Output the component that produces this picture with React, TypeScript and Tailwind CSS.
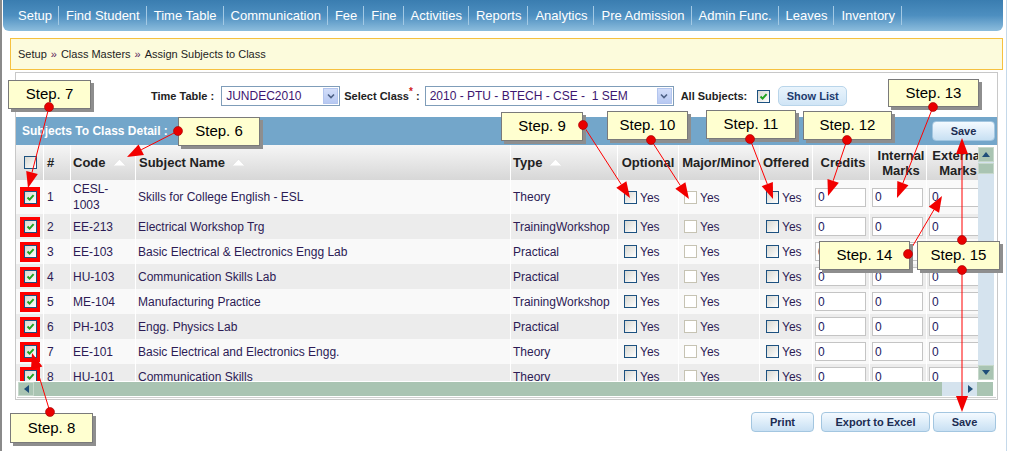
import React from "react";

const navItems = [
  "Setup",
  "Find Student",
  "Time Table",
  "Communication",
  "Fee",
  "Fine",
  "Activities",
  "Reports",
  "Analytics",
  "Pre Admission",
  "Admin Func.",
  "Leaves",
  "Inventory",
];

type Subject = { code: string; name: string; type: string };

const subjects: Subject[] = [
  { code: "CESL-\n1003", name: "Skills for College English - ESL", type: "Theory" },
  { code: "EE-213", name: "Electrical Workshop Trg", type: "TrainingWorkshop" },
  { code: "EE-103", name: "Basic Electrical & Electronics Engg Lab", type: "Practical" },
  { code: "HU-103", name: "Communication Skills Lab", type: "Practical" },
  { code: "ME-104", name: "Manufacturing Practice", type: "TrainingWorkshop" },
  { code: "PH-103", name: "Engg. Physics Lab", type: "Practical" },
  { code: "EE-101", name: "Basic Electrical and Electronics Engg.", type: "Theory" },
  { code: "HU-101", name: "Communication Skills", type: "Theory" },
];

const cols = "grid grid-cols-[28px_27px_65px_375px_107px_61px_81px_53px_57px_57px_57px]";

function Box({ checked, disabled }: { checked?: boolean; disabled?: boolean }) {
  return (
    <span
      className={`relative inline-block w-[13px] h-[13px] shrink-0 border ${
        disabled
          ? "border-[#c6c3b3] bg-white"
          : "border-[#1c5180] bg-linear-to-br from-[#d8d8d2] to-white"
      }`}
    >
      {checked && (
        <svg className="absolute inset-0" width="11" height="11" viewBox="0 0 11 11">
          <path d="M2.5 5.5 L4.6 7.6 L8.6 3.2" stroke="#1fa31f" strokeWidth="2" fill="none" />
        </svg>
      )}
    </span>
  );
}

function SortIcon() {
  return (
    <svg width="15" height="9" viewBox="0 0 15 9" className="ml-[6px]">
      <polygon points="7.5,1 14,8 1,8" fill="#ffffff" stroke="#e4e4e4" strokeWidth="1" />
    </svg>
  );
}

function Btn({ label, className }: { label: string; className: string }) {
  return (
    <button
      className={`${className} h-[20px] rounded-[4px] border border-[#a3c6e0] bg-linear-to-b from-[#f4faff] to-[#c8e0f3] text-[11px] font-bold text-[#1b2c52] leading-none`}
    >
      {label}
    </button>
  );
}

function Select({ value, className }: { value: string; className: string }) {
  return (
    <div className={`${className} h-[20px] border border-[#7f9db9] bg-white flex items-center justify-between`}>
      <span className="pl-[4px] text-[12px] font-normal text-[#3d1670] whitespace-pre">{value}</span>
      <span className="w-[15px] h-[16px] mr-px bg-linear-to-b from-[#d3def9] to-[#b7c9f2] border border-[#b3c5ee] flex items-center justify-center">
        <svg width="8" height="6" viewBox="0 0 8 6">
          <path d="M1 1.5 L4 4.5 L7 1.5" stroke="#4d6185" strokeWidth="1.6" fill="none" />
        </svg>
      </span>
    </div>
  );
}

function Arrow({ x1, y1, x2, y2 }: { x1: number; y1: number; x2: number; y2: number }) {
  const dx = x2 - x1;
  const dy = y2 - y1;
  const len = Math.hypot(dx, dy);
  const ux = dx / len;
  const uy = dy / len;
  const L = 16;
  const W = 6;
  const bx = x2 - ux * L;
  const by = y2 - uy * L;
  const pts = `${x2},${y2} ${bx - uy * W},${by + ux * W} ${bx + uy * W},${by - ux * W}`;
  return (
    <g>
      <line x1={x1} y1={y1} x2={bx} y2={by} stroke="#ff0000" strokeWidth="1" />
      <polygon points={pts} fill="#f20000" />
    </g>
  );
}

const arrows = [
  [49, 107, 28, 188],
  [178, 131, 127, 157],
  [583, 125, 630, 198],
  [651, 140, 689, 199],
  [750, 139, 773, 199],
  [847, 140, 828, 196],
  [933, 107, 897, 198],
  [908, 254, 942, 196],
  [962, 240, 962, 138],
  [962, 270, 962, 412],
  [50, 412, 32, 353],
];

function Callout({ label, className }: { label: string; className: string }) {
  return (
    <div
      className={`absolute ${className} bg-[#ffffd0] border border-[#7a7a7a] shadow-[3px_3px_0_#8e8e8e] flex items-center justify-center text-[15px] text-black`}
    >
      {label}
    </div>
  );
}

function Annotations() {
  return (
    <div className="absolute inset-0 pointer-events-none">
      <svg className="absolute inset-0" width="1009" height="451">
        {arrows.map((a, i) => (
          <Arrow key={i} x1={a[0]} y1={a[1]} x2={a[2]} y2={a[3]} />
        ))}
      </svg>
      <Callout label="Step. 7" className="left-[8px] top-[80px] w-[83px] h-[29px]" />
      <Callout label="Step. 6" className="left-[178px] top-[117px] w-[82px] h-[29px]" />
      <Callout label="Step. 9" className="left-[501px] top-[112px] w-[82px] h-[29px]" />
      <Callout label="Step. 10" className="left-[607px] top-[111px] w-[81px] h-[29px]" />
      <Callout label="Step. 11" className="left-[706px] top-[110px] w-[90px] h-[29px]" />
      <Callout label="Step. 12" className="left-[803px] top-[111px] w-[89px] h-[29px]" />
      <Callout label="Step. 13" className="left-[888px] top-[79px] w-[91px] h-[28px]" />
      <Callout label="Step. 14" className="left-[819px] top-[241px] w-[91px] h-[29px]" />
      <Callout label="Step. 15" className="left-[917px] top-[241px] w-[83px] h-[29px]" />
      <Callout label="Step. 8" className="left-[10px] top-[413px] w-[83px] h-[30px]" />
      <svg className="absolute inset-0" width="1009" height="451">
        {arrows.map((a, i) => (
          <circle key={i} cx={a[0]} cy={a[1]} r="4.5" fill="#e80000" stroke="#a00000" strokeWidth="0.6" />
        ))}
      </svg>
    </div>
  );
}

export default function App() {
  return (
    <div className="relative w-[1009px] h-[451px] overflow-hidden bg-white flex font-['Liberation_Sans',Arial,sans-serif]">
      <div className="w-[2px] bg-[#8a8a8a]" />
      <div className="w-[1004px] flex flex-col">
        {/* top menu */}
        <div className="ml-px w-[1000px] h-[31px] rounded-b-[6px] bg-linear-to-b from-[#3a7db0] via-[#4d8fc0] to-[#8cbddd] flex items-center pl-[8px]">
          {navItems.map((item) => (
            <div key={item} className="flex items-center">
              <span className="pl-[7px] pr-[6px] text-[13px] text-white">{item}</span>
              <span className="w-px h-[19px] bg-[#a3c9e4]" />
            </div>
          ))}
        </div>

        {/* breadcrumb */}
        <div className="mt-[7px] ml-[8px] w-[993px] h-[32px] border border-[#f6c13f] bg-[#fcfbdc] flex items-center pl-[7px] text-[11px] text-[#1e1e1e]">
          Setup <span className="mx-[4px] text-[#5a1a5a]">»</span> Class Masters{" "}
          <span className="mx-[4px] text-[#5a1a5a]">»</span> Assign Subjects to Class
        </div>

        {/* panel */}
        <div className="mt-[2px] ml-[13px] w-[983px] h-[328px] border border-[#c8c8c8] flex flex-col">
          <div className="h-[44px] pt-[13px] pl-[135px] flex items-start">
            <div className="flex items-center h-[20px] text-[11px] font-bold text-[#222]">
              <span>Time Table :</span>
              <Select value="JUNDEC2010" className="ml-[7px] w-[119px]" />
              <span className="ml-[4px]">
                Select Class<sup className="text-[#d02020] text-[10px]">*</sup> :
              </span>
              <Select value="2010 - PTU - BTECH - CSE -  1 SEM" className="ml-[5px] w-[249px]" />
              <span className="ml-[7px]">All Subjects:</span>
              <span className="ml-[10px] flex">
                <Box checked />
              </span>
              <button className="ml-[8px] w-[69px] h-[20px] rounded-[5px] border border-[#b9d5ea] bg-linear-to-b from-[#e9f4fc] to-[#d0e5f6] text-[11px] font-bold text-[#1c3a6e]">
                Show List
              </button>
            </div>
          </div>

          <div className="h-[28px] bg-[#73a6ca] flex items-center justify-between pl-[6px] pr-[2px]">
            <span className="text-[12px] font-bold text-white">Subjects To Class Detail :</span>
            <Btn label="Save" className="w-[63px]" />
          </div>

          <div className="flex">
            <div className="w-[962px] h-[236px] overflow-hidden bg-white">
              <div className={`${cols} h-[35px] bg-linear-to-b from-[#f6f6f6] to-[#d7d7d7] text-[13px] font-bold text-[#222]`}>
                <div className="flex items-center pl-[8px] border-r border-white">
                  <Box />
                </div>
                <div className="flex items-center pl-[3px] border-r border-white">#</div>
                <div className="flex items-center pl-[2px] border-r border-white">
                  Code
                  <SortIcon />
                </div>
                <div className="flex items-center pl-[3px] border-r border-white">
                  Subject Name
                  <SortIcon />
                </div>
                <div className="flex items-center pl-[2px] border-r border-white">
                  Type
                  <SortIcon />
                </div>
                <div className="flex items-center justify-center border-r border-white">Optional</div>
                <div className="flex items-center justify-center border-r border-white">Major/Minor</div>
                <div className="flex items-center justify-center border-r border-white">Offered</div>
                <div className="flex items-center justify-center pl-[4px] border-r border-white">Credits</div>
                <div className="flex flex-col items-center justify-center pl-[6px] leading-[15px] border-r border-white">
                  <span>Internal</span>
                  <span>Marks</span>
                </div>
                <div className="flex flex-col items-center justify-center pl-[6px] leading-[15px] border-r border-white">
                  <span>External</span>
                  <span>Marks</span>
                </div>
              </div>

              {subjects.map((s, i) => (
                <div
                  key={i}
                  className={`${cols} ${i % 2 ? "bg-[#ececec]" : "bg-[#f9f9f9]"} ${
                    i === 0 ? "h-[34px]" : "h-[25px]"
                  } text-[12px] text-[#2c1b55]`}
                >
                  <div className="flex items-center pl-[4px] border-r border-white">
                    <span className="w-[20px] h-[20px] bg-[#ff0000] flex items-center justify-center">
                      <Box checked />
                    </span>
                  </div>
                  <div className="flex items-center pl-[3px] border-r border-white">{i + 1}</div>
                  <div className="flex items-center pl-[2px] border-r border-white whitespace-pre-line leading-[16px]">
                    {s.code}
                  </div>
                  <div className="flex items-center pl-[2px] border-r border-white">{s.name}</div>
                  <div className="flex items-center pl-[2px] border-r border-white">{s.type}</div>
                  <div className="flex items-center pl-[6px] border-r border-white">
                    <Box />
                    <span className="ml-[3px] pt-px">Yes</span>
                  </div>
                  <div className="flex items-center pl-[5px] border-r border-white">
                    <Box disabled />
                    <span className="ml-[3px] pt-px">Yes</span>
                  </div>
                  <div className="flex items-center pl-[6px] border-r border-white">
                    <Box />
                    <span className="ml-[3px] pt-px">Yes</span>
                  </div>
                  {[0, 1, 2].map((k) => (
                    <div key={k} className="flex items-center pl-[2px] border-r border-white">
                      <span className="w-[51px] h-[19px] border border-[#c4c4c4] bg-white pl-[2px] flex items-center text-[12px] text-[#1d1860]">
                        0
                      </span>
                    </div>
                  ))}
                </div>
              ))}
            </div>

            {/* vertical scrollbar */}
            <div className="w-[16px] h-[233px] mt-[2px] bg-[#d5e3ee] flex flex-col justify-between">
              <div className="flex flex-col">
                <div className="h-[15px] bg-[#a9c4b2] border border-[#c6d8cb] flex items-center justify-center">
                  <svg width="8" height="5" viewBox="0 0 8 5">
                    <polygon points="4,0 8,5 0,5" fill="#1f4e79" />
                  </svg>
                </div>
                <div className="h-[11px] mt-px bg-[#a9c4b2] border border-[#c6d8cb]" />
              </div>
              <div className="h-[15px] bg-[#a9c4b2] border border-[#c6d8cb] flex items-center justify-center">
                <svg width="8" height="5" viewBox="0 0 8 5">
                  <polygon points="0,0 8,0 4,5" fill="#1f4e79" />
                </svg>
              </div>
            </div>
          </div>

          {/* horizontal scrollbar */}
          <div className="mt-px ml-[2px] h-[14px] flex">
            <div className="w-[16px] bg-[#a9c4b2] border border-[#c6d8cb] flex items-center justify-center">
              <svg width="5" height="8" viewBox="0 0 5 8">
                <polygon points="0,4 5,0 5,8" fill="#1f4e79" />
              </svg>
            </div>
            <div className="w-[908px] bg-[#a9c4b2]" />
            <div className="w-[22px] bg-[#d5e3ee]" />
            <div className="w-[13px] bg-[#d5e3ee] flex items-center justify-center">
              <svg width="5" height="8" viewBox="0 0 5 8">
                <polygon points="0,0 5,4 0,8" fill="#1f4e79" />
              </svg>
            </div>
            <div className="w-[16px] bg-[#a9c4b2]" />
          </div>
          <div className="mt-[1px] mx-px h-px bg-[#d0d0d0]" />
        </div>

        {/* bottom buttons */}
        <div className="mt-[12px] flex justify-end pr-[10px]">
          <Btn label="Print" className="w-[63px]" />
          <Btn label="Export to Excel" className="ml-[7px] w-[109px]" />
          <Btn label="Save" className="ml-[3px] w-[63px]" />
        </div>
      </div>
      <div className="w-px bg-[#c5d9ea]" />

      <Annotations />
    </div>
  );
}
